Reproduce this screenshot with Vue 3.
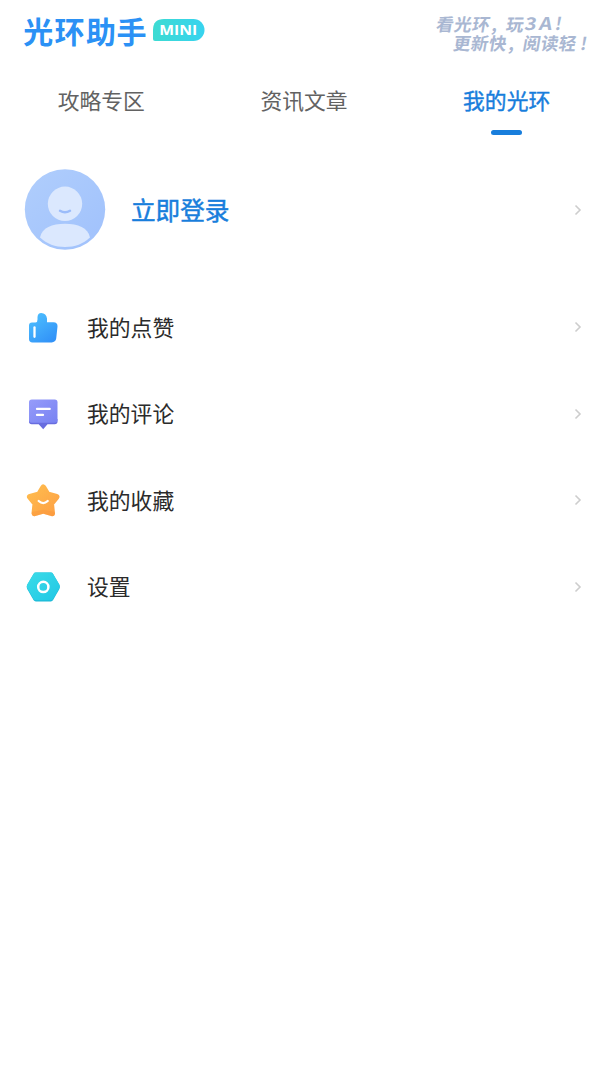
<script setup>
const tabs = ['攻略专区', '资讯文章', '我的光环']
const active = 2
const items = [
  { icon: 'like', label: '我的点赞' },
  { icon: 'comment', label: '我的评论' },
  { icon: 'star', label: '我的收藏' },
  { icon: 'settings', label: '设置' },
]
</script>

<template>
  <main class="page">
    <header class="header">
      <svg class="logo" width="190" height="56" viewBox="0 0 190 56">
        <defs>
          <linearGradient id="badge" x1="0" x2="1" y1="0" y2="0">
            <stop offset="0" stop-color="#3ddbd2" />
            <stop offset="1" stop-color="#37d3ef" />
          </linearGradient>
        </defs>
        <text class="brand" x="3.2 34.6 66 96.600" y="35">光环助手</text>
        <path d="M135 33Q133 33 133 31V22Q133 11 144 11H173.5A10.9 10.9 0 0 1 173.5 33Z" fill="url(#badge)" />
        <text class="mini" x="139.3" y="27.4" textLength="38" lengthAdjust="spacingAndGlyphs">MINI</text>
      </svg>
      <svg class="slogan" width="178" height="60" viewBox="0 0 178 60">
        <g transform="skewX(-10)">
          <text x="19.3 37.3 55.3 75 89.3" y="22.600">看光环,玩</text>
          <text x="107.600" y="22.300" textLength="12" lengthAdjust="spacingAndGlyphs">3</text>
          <text x="122.300" y="22.300" textLength="13" lengthAdjust="spacingAndGlyphs">A</text>
          <text x="138.3" y="22.300">!</text>
          <text x="39.6 57.4 75.4 95.3 109.4 127.4 145.200 166.800" y="41.600">更新快,阅读轻!</text>
        </g>
      </svg>
    </header>

    <nav class="tabs">
      <div v-for="(tab, i) in tabs" :key="tab" class="tab" :class="{ active: i === active }">
        <span>{{ tab }}</span>
        <i v-if="i === active" class="indicator"></i>
      </div>
    </nav>

    <section class="profile">
      <svg class="avatar" width="82" height="82" viewBox="0 0 82 82">
        <defs>
          <linearGradient id="avatarBg" x1="0" x2="1" y1="0" y2="1">
            <stop offset="0" stop-color="#b0cefc" />
            <stop offset="1" stop-color="#a0c1fc" />
          </linearGradient>
        </defs>
        <circle cx="41" cy="40.500" r="40.2" fill="url(#avatarBg)" />
        <circle cx="41" cy="34.800" r="17.2" fill="#dbe8fe" />
        <path d="M16 68.500C18 58.500 28 54.700 41 54.700S64 58.500 66 68.500C59 75 51 78 41 78S23 75 16 68.500Z" fill="#dbe8fe" />
        <path d="M36 41.800Q41 44.800 46 41.800" fill="none" stroke="#9bbcfa" stroke-width="2.500" stroke-linecap="round" />
      </svg>
      <span class="login">立即登录</span>
      <svg class="chevron" width="8" height="12" viewBox="0 0 8 12"><path d="M1.500 1.500L6 6L1.500 10.500" /></svg>
    </section>

    <section class="menu">
      <div v-for="item in items" :key="item.icon" class="row">
        <svg v-if="item.icon === 'like'" class="icon" width="36" height="36" viewBox="0 0 36 36">
          <defs>
            <linearGradient id="likeBg" x1="0" x2=".7" y1="0" y2="1">
              <stop offset="0" stop-color="#50c3ff" />
              <stop offset="1" stop-color="#3293f8" />
            </linearGradient>
          </defs>
          <path d="M7 13.500H10.500Q12.700 13 12.500 10.500V8Q12.800 4 16.200 4Q21.300 4.200 22 9.500V13.300H28.500Q32.800 13.500 32.500 17.500L31.200 29.500Q30.500 33.300 26.700 33.400H7.500Q4 33.400 4 30V16.500Q4 13.500 7 13.500Z" fill="url(#likeBg)" />
          <path d="M9.500 18.500V27.800" fill="none" stroke="#fff" stroke-width="2.300" stroke-linecap="round" />
        </svg>
        <svg v-else-if="item.icon === 'comment'" class="icon" width="36" height="36" viewBox="0 0 36 36">
          <defs>
            <linearGradient id="commentBg" x1="0" x2="1" y1="0" y2="1">
              <stop offset="0" stop-color="#969cfa" />
              <stop offset="1" stop-color="#7882f2" />
            </linearGradient>
          </defs>
          <path d="M4 23H32.500V25.500Q32.500 28.200 29.800 28.200H22.500L18.200 33.200L13.700 28.200H6.700Q4 28.200 4 25.500Z" fill="#686ddf" />
          <path d="M6.800 3.500H29.700Q32.500 3.500 32.500 6.300V24Q32.500 26.800 29.700 26.800H6.800Q4 26.800 4 24V6.300Q4 3.500 6.800 3.500Z" fill="url(#commentBg)" />
          <path d="M12 12.900H24.700M12 18.900H18" fill="none" stroke="#fff" stroke-width="2.300" stroke-linecap="round" />
        </svg>
        <svg v-else-if="item.icon === 'star'" class="icon" width="36" height="36" viewBox="0 0 36 36">
          <defs>
            <linearGradient id="starBg" gradientUnits="userSpaceOnUse" x1="4" x2="32" y1="4" y2="33">
              <stop offset="0" stop-color="#ffbd4e" />
              <stop offset="1" stop-color="#fda044" />
            </linearGradient>
          </defs>
          <g fill="url(#starBg)" stroke="url(#starBg)" stroke-width="6" stroke-linejoin="round">
            <path d="M18.300 5.500L22.500 12.500L31.500 14.800L26 21.500L27 31.200L18.300 28.700L9.500 31.200L10.500 21.500L5 14.800L14.100 12.500Z" />
          </g>
          <path d="M7 30L18.300 27.700L29.500 30Q30.300 33.700 27 34.200L18.300 31.800L9.500 34.200Q6.200 33.700 7 30Z" fill="#f9933a" opacity=".4" />
          <path d="M13.700 19Q18.200 23.200 22.700 19" fill="none" stroke="#fff" stroke-width="2.300" stroke-linecap="round" />
        </svg>
        <svg v-else class="icon" width="36" height="36" viewBox="0 0 36 36">
          <defs>
            <linearGradient id="settingsBg" x1="0" x2="1" y1="0" y2="1">
              <stop offset="0" stop-color="#3cdce8" />
              <stop offset="1" stop-color="#20c7e5" />
            </linearGradient>
          </defs>
          <path d="M10.800 3.500H25.800Q27.300 3.500 28.100 4.900L34.400 16Q35.400 18 34.400 20L28.100 31.100Q27.300 32.500 25.800 32.500H10.800Q9.300 32.500 8.500 31.100L2.200 20Q1.200 18 2.200 16L8.500 4.900Q9.300 3.500 10.800 3.500Z" fill="#1bb9d6" />
          <path d="M10.800 3.500H25.800Q27.300 3.500 28.100 4.900L34.400 15.500Q35.400 17.300 34.400 19L28.100 30Q27.300 31.300 25.800 31.300H10.800Q9.300 31.300 8.500 30L2.200 19Q1.200 17.300 2.200 15.500L8.500 4.900Q9.300 3.500 10.800 3.500Z" fill="url(#settingsBg)" />
          <circle cx="18.300" cy="17.900" r="5.100" fill="none" stroke="#fff" stroke-width="2.500" />
        </svg>
        <span class="label">{{ item.label }}</span>
        <svg class="chevron" width="8" height="12" viewBox="0 0 8 12"><path d="M1.500 1.500L6 6L1.500 10.500" /></svg>
      </div>
    </section>
  </main>
</template>

<style>
body {
  background: #fff;
}
</style>

<style scoped>
.page {
  box-sizing: border-box;
  width: 100%;
  height: 1080px;
  overflow: hidden;
  background: #fff;
  font-family: 'Noto Sans CJK SC', sans-serif;
}
.header {
  display: flex;
  justify-content: space-between;
  height: 71px;
  padding: 8px 10px 0 20px;
  box-sizing: border-box;
}
.brand {
  font-size: 30px;
  font-weight: 700;
  fill: #2b91f5;
}
.mini {
  font-family: 'Open Sans', sans-serif;
  font-size: 14.5px;
  font-weight: 700;
  fill: #fff;
}
.slogan text {
  font-size: 17.5px;
  font-weight: 700;
  fill: #a9b7d2;
}
.tabs {
  display: grid;
  grid-template-columns: repeat(3, 1fr);
  height: 69px;
}
.tab {
  display: flex;
  flex-direction: column;
  align-items: center;
  padding-top: 12px;
  font-size: 21.8px;
  line-height: 33px;
  color: #626262;
}
.tab.active {
  color: #187edc;
  -webkit-text-stroke: 0.4px #187edc;
}
.indicator {
  width: 31px;
  height: 5px;
  margin-top: 14px;
  border-radius: 2.5px;
  background: #187edc;
}
.profile {
  display: flex;
  align-items: center;
  height: 139px;
  padding: 0 26px 0 24px;
}
.login {
  flex: 1;
  margin: -2px 0 0 25px;
  font-size: 24.6px;
  line-height: 36px;
  color: #187edc;
  -webkit-text-stroke: 0.5px #187edc;
}
.menu {
  padding-top: 5px;
}
.row {
  display: flex;
  align-items: center;
  height: 86.5px;
  padding: 0 26px 0 25px;
}
.label {
  flex: 1;
  margin: -2px 0 0 26px;
  font-size: 21.8px;
  line-height: 33px;
  color: #2b2b2b;
}
.chevron path {
  fill: none;
  stroke: #cdcdcd;
  stroke-width: 1.6;
}
</style>
